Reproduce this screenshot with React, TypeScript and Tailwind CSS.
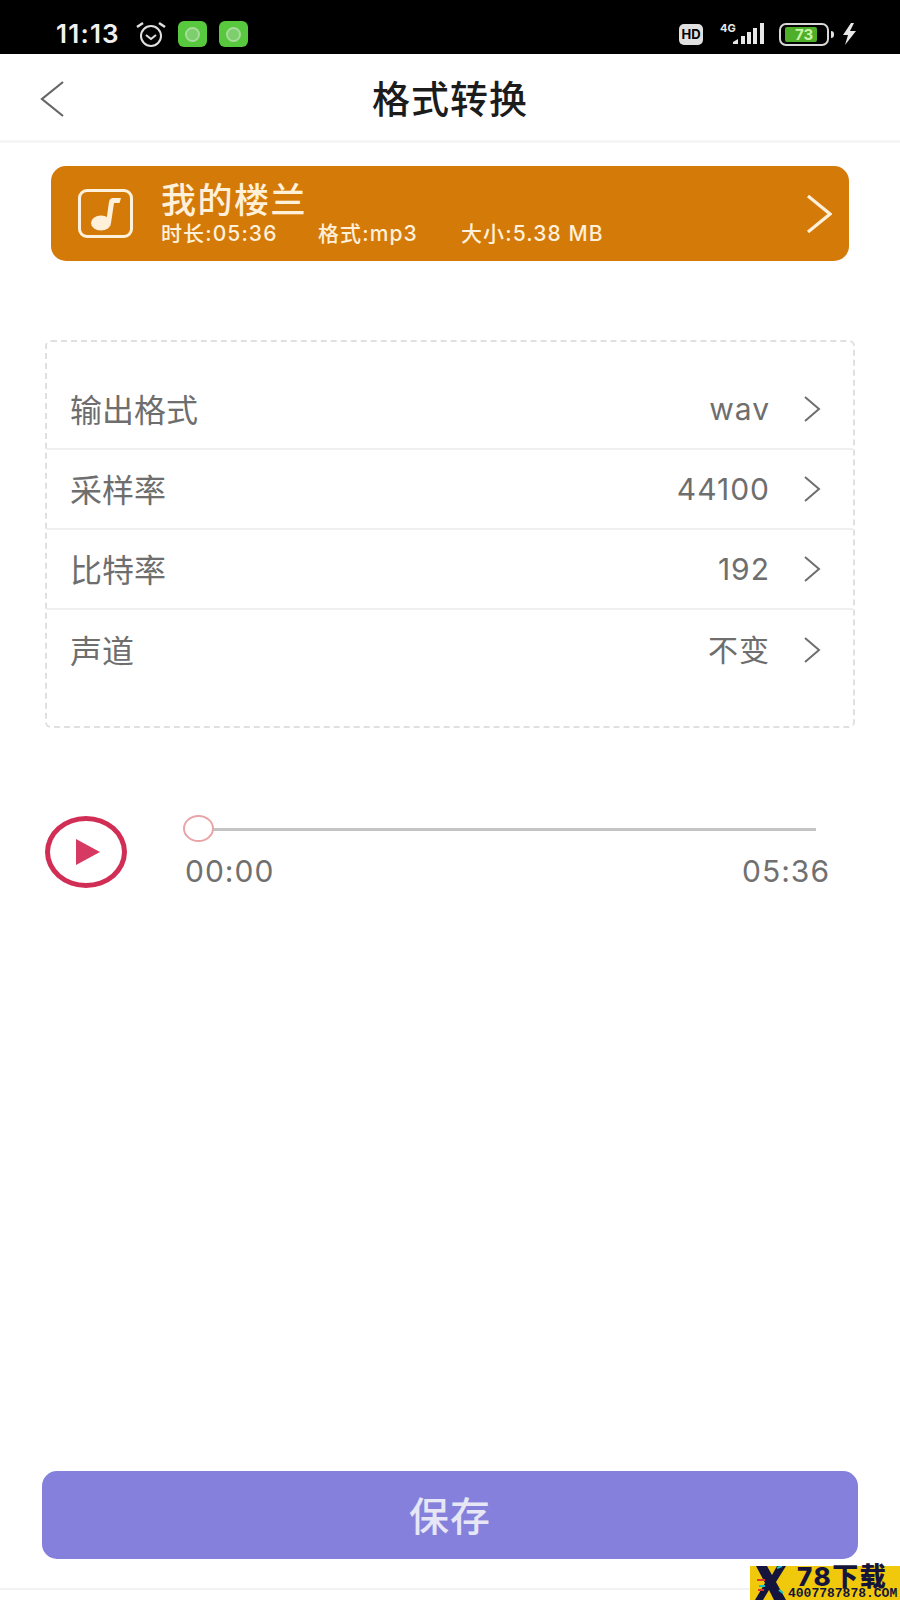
const rows = [
  { label: "输出格式", value: "wav" },
  { label: "采样率", value: "44100" },
  { label: "比特率", value: "192" },
  { label: "声道", value: "不变" },
]

function Chevron({ w, h, stroke, color }: { w: number; h: number; stroke: number; color: string }) {
  return (
    <svg width={w} height={h} viewBox={`0 0 ${w} ${h}`} fill="none" stroke={color} strokeWidth={stroke} className="shrink-0">
      <path d={`M2 2L${w - 2} ${h / 2}L2 ${h - 2}`} />
    </svg>
  )
}

function AppIcon() {
  return (
    <div className="w-[29px] h-[26px] rounded-[6px] bg-[#58c83e] flex items-center justify-center">
      <div className="w-[15px] h-[15px] rounded-full border-2 border-[#a8dc9c] bg-[#7ccf6c]" />
    </div>
  )
}

function StatusBar() {
  return (
    <div className="h-[54px] bg-black flex items-center pl-[56px] pr-[43px] pt-[14px] shrink-0">
      <span className="text-[26px] font-semibold text-[#f0f0f0] tracking-[1.2px] font-['Inter',sans-serif] leading-none">11:13</span>
      <svg className="ml-[15px]" width="32" height="28" viewBox="0 0 32 28" fill="none" stroke="#e0e0e0" strokeWidth="2">
        <circle cx="16" cy="16" r="10" />
        <path d="M11 15l5 4 5-4" />
        <path d="M2 7l6-4M30 7l-6-4" strokeWidth="2.5" />
      </svg>
      <div className="ml-[11px] flex gap-[12px]">
        <AppIcon />
        <AppIcon />
      </div>
      <div className="ml-auto flex items-center">
        <div className="w-[24px] h-[21px] rounded-[5px] bg-[#e0e0e0] flex items-center justify-center">
          <span className="text-[13px] font-bold text-black leading-none font-['Inter',sans-serif]">HD</span>
        </div>
        <div className="ml-[15px] w-[48px] h-[24px] relative">
          <span className="absolute left-[2px] top-0 text-[11px] leading-[12px] font-bold text-[#e8e8e8] font-['Inter',sans-serif]">4G</span>
          <svg width="48" height="24" viewBox="0 0 48 24" fill="#e8e8e8">
            <path d="M15 20l5-3v5h-5zM23 14h4v8h-4zM29 10h4v12h-4zM35 6h4v16h-4zM42 1h4v21h-4z" />
          </svg>
        </div>
        <div className="ml-[13px] w-[50px] h-[23px] rounded-[7px] border-2 border-[#d8d8d8] flex items-center pl-[4px] relative">
          <div className="w-[32px] h-[15px] rounded-[2px] bg-[#4fae2a]" />
          <span className="absolute left-[14px] top-0 text-[15px] leading-[19px] font-bold text-[#c9f5a8] font-['Inter',sans-serif]">73</span>
        </div>
        <div className="ml-[2px] w-[3px] h-[7px] rounded-r-sm bg-[#e0e0e0]" />
        <svg className="ml-[8px]" width="15" height="22" viewBox="0 0 15 22" fill="#e8e8e8">
          <path d="M9 0L1 12h5l-3 10 11-14H8l4-8z" />
        </svg>
      </div>
    </div>
  )
}

function Watermark() {
  return (
    <div className="absolute right-0 bottom-0 w-[150px] h-[34px] bg-[#f0c90c] flex items-start">
      <svg className="shrink-0 ml-[5px]" width="32" height="34" viewBox="0 0 32 34">
        <path d="M1 0h11l5 9 5-9h9L21 16l10 18H19l-5-10-6 10H0l10-17z" fill="#14143c" />
        <path d="M22 2l5-2M4 20h6M24 24l4 3" stroke="#19c4c4" strokeWidth="2" />
        <path d="M2 14h8M3 24h6" stroke="#e0342c" strokeWidth="2" />
      </svg>
      <div className="flex flex-col ml-[1px] text-[#14143c] font-bold whitespace-nowrap">
        <div className="text-[26px] leading-[22px] pl-[9px] tracking-[1.5px] font-extrabold">78下载</div>
        <div className="text-[13px] leading-[12px] font-['Liberation_Mono',monospace]">4007787878.COM</div>
      </div>
    </div>
  )
}

export default function App() {
  return (
    <div className="relative w-[900px] h-[1600px] bg-white flex flex-col overflow-hidden font-['Inter','Noto_Sans_CJK_SC',sans-serif]">
      <StatusBar />

      <div className="relative h-[89px] shrink-0 flex items-center justify-center border-b-[3px] border-[#f6f6f6]">
        <svg className="absolute left-[39px] top-[26px]" width="26" height="38" viewBox="0 0 26 38" fill="none" stroke="#666" strokeWidth="2.2">
          <path d="M24 2L3 19l21 17" />
        </svg>
        <h1 className="text-[38px] font-medium text-[#1c1c1c] tracking-[1px] leading-none pt-[4px]">格式转换</h1>
      </div>

      <div className="mt-[23px] mx-[51px] h-[95px] rounded-[15px] bg-[#d47a09] flex items-center pl-[27px] pr-[17px] shrink-0 text-[#fff0da]">
        <div className="w-[55px] h-[49px] rounded-[9px] border-[3px] border-[#fff1dc] flex items-center justify-center">
          <svg width="30" height="36" viewBox="0 0 30 36" fill="#fff0da">
            <ellipse cx="10" cy="27" rx="10" ry="7.5" />
            <path d="M15 27L18 6C18.5 3 20 2 22 2h8l-1.5 5H23l-3 20z" />
          </svg>
        </div>
        <div className="ml-[28px] flex flex-col pt-[3px]">
          <div className="text-[35px] leading-[38px] font-medium tracking-[1.5px]">我的楼兰</div>
          <div className="flex text-[21px] leading-[30px] font-medium tracking-[1.1px]">
            <span className="w-[157px]">时长:05:36</span>
            <span className="w-[143px]">格式:mp3</span>
            <span>大小:5.38 MB</span>
          </div>
        </div>
        <div className="ml-auto">
          <Chevron w={26} h={40} stroke={3.2} color="#fff0da" />
        </div>
      </div>

      <div className="mt-[79px] mx-[45px] h-[388px] border-2 border-dashed border-[#e0e0e0] rounded-[6px] pt-[28px] shrink-0">
        {rows.map((r, i) => (
          <div
            key={r.label}
            className={`h-[80px] flex items-center pl-[23px] pr-[32px] ${i < rows.length - 1 ? "border-b-2 border-[#efefef]" : ""}`}
          >
            <span className="text-[32px] text-[#6e6e6e] pt-[3px]">{r.label}</span>
            <span className="ml-auto text-[30px] text-[#6e6e6e] tracking-[1px]">{r.value}</span>
            <div className="ml-[33px]">
              <Chevron w={18} h={28} stroke={2} color="#6e6e6e" />
            </div>
          </div>
        ))}
      </div>

      <div className="mt-[83px] ml-[45px] mr-[70px] flex shrink-0">
        <div className="mt-[5px] w-[82px] h-[72px] rounded-[50%] border-[5px] border-[#d12e56] flex items-center justify-center shrink-0">
          <svg width="26" height="28" viewBox="0 0 26 28" className="ml-[3px]">
            <path d="M1 1l24 13L1 27z" fill="#d63a62" />
          </svg>
        </div>
        <div className="ml-[56px] flex-1 flex flex-col pt-[4px]">
          <div className="relative h-[28px] flex items-center">
            <div className="h-[3px] w-[619px] ml-[14px] bg-[#c4c4c4]" />
            <div className="absolute left-0 top-0 w-[31px] h-[27px] rounded-[50%] border-2 border-[#e9a4a8] bg-white" />
          </div>
          <div className="mt-[11px] pl-[2px] flex justify-between text-[30px] leading-[34px] text-[#707070] tracking-[1px]">
            <span>00:00</span>
            <span>05:36</span>
          </div>
        </div>
      </div>

      <button className="mt-auto mb-[41px] mx-[42px] h-[88px] rounded-[15px] bg-[#8480db] text-[40px] font-medium text-[#e6e6f6] tracking-[1px] pt-[3px] shrink-0">
        保存
      </button>

      <div className="absolute left-0 right-0 bottom-[10px] h-[2px] bg-[#f2f2f2]" />

      <Watermark />
    </div>
  )
}
